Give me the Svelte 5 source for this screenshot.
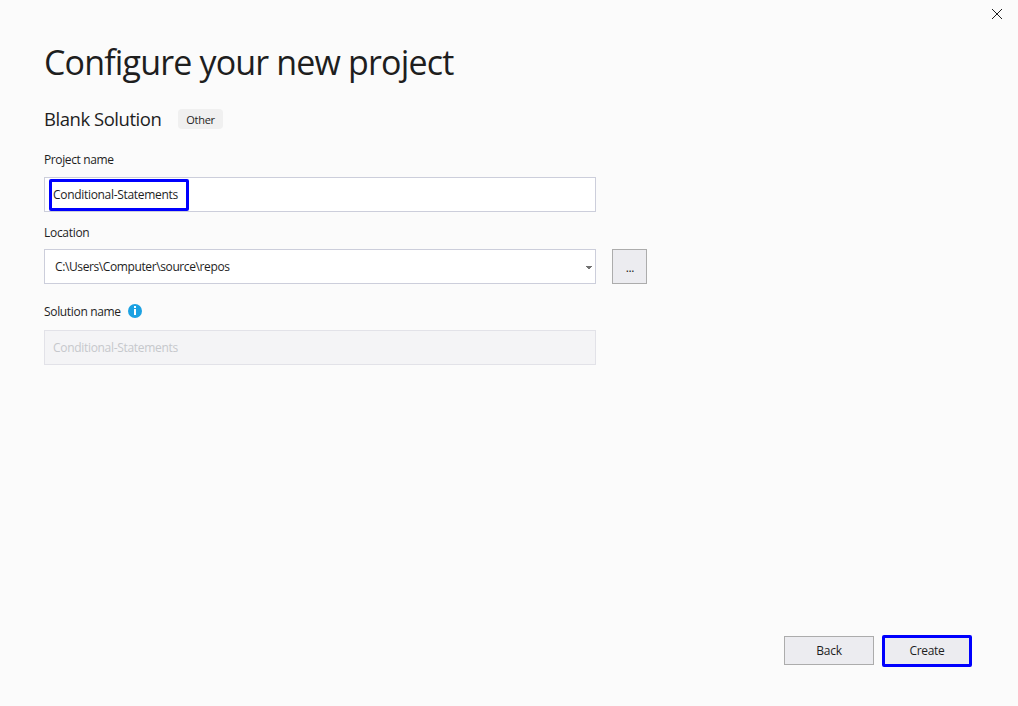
<script>
  let projectName = $state('Conditional-Statements');
  const location = 'C:\\Users\\Computer\\source\\repos';
</script>

<main class="dialog">
  <button class="close" aria-label="Close">
    <svg width="12" height="12" viewBox="0 0 12 12"><path d="M1 1L11 11M11 1L1 11" /></svg>
  </button>

  <h1><span>Configure your new project</span></h1>

  <div class="template">
    <h2>Blank Solution</h2>
    <span class="tag">Other</span>
  </div>

  <div class="label first">Project name</div>
  <div class="field">
    <span class="name">{projectName}</span>
    <span class="marker"></span>
  </div>

  <div class="label second">Location</div>
  <div class="row">
    <div class="field combo">
      <span class="path">{location}</span>
      <svg class="arrow" width="6" height="3" viewBox="0 0 6 3"><path d="M0 0H6V1H5V2H4V3H2V2H1V1H0Z" /></svg>
    </div>
    <button class="browse">...</button>
  </div>

  <div class="label third">
    <span>Solution name</span>
    <svg width="14" height="14" viewBox="0 0 14 14">
      <circle cx="7" cy="7" r="7" fill="#1ba1e2" />
      <path d="M6 2H8V4H6ZM6 5H8V11H6Z" fill="#fff" />
    </svg>
  </div>
  <div class="field disabled"><span class="name">{projectName}</span></div>

  <footer>
    <button class="action">Back</button>
    <button class="action create">Create</button>
  </footer>
</main>

<style>
  :global(body) { margin: 0; background: #fbfbfb; }
  .dialog {
    box-sizing: border-box;
    width: 1018px;
    height: 706px;
    padding: 0 46px 39px 44px;
    display: flex;
    flex-direction: column;
    position: relative;
    overflow: hidden;
    background: #fbfbfb;
    color: #1e1e1e;
    font: 12px/16px "Open Sans", "Noto Sans", sans-serif;
    white-space: nowrap;
  }
  button { font: inherit; color: inherit; padding: 0; box-sizing: border-box; }
  .close {
    position: absolute;
    left: 991px;
    top: 8px;
    width: 12px;
    height: 12px;
    border: 0;
    background: none;
  }
  .close svg { display: block; }
  .close path { stroke: #1e1e1e; stroke-width: 1; fill: none; }
  h1 {
    margin: 38px 0 0;
    height: 48px;
    font-size: 34px;
    line-height: 48px;
    font-weight: 400;
    letter-spacing: -0.84px;
  }
  .template { display: flex; align-items: center; height: 20px; margin-top: 23px; }
  h2 { margin: 0; width: 134px; font-size: 18.5px; line-height: 20px; font-weight: 400; letter-spacing: -0.46px; }
  .tag {
    width: 45px;
    height: 20px;
    line-height: 21px;
    font-size: 11px;
    letter-spacing: -0.25px;
    text-align: center;
    border-radius: 4px;
    background: #f0f0f0;
  }
  .label { height: 16px; letter-spacing: -0.38px; }
  .first { margin: 23px 0 9px; }
  .second { margin: 13px 0 8px; letter-spacing: -0.3px; }
  .third { margin: 20px 0 10px; display: flex; letter-spacing: -0.33px; }
  .third span { width: 84px; }
  .field {
    box-sizing: border-box;
    width: 552px;
    height: 35px;
    flex: none;
    display: flex;
    align-items: center;
    border: 1px solid #cccedb;
    background: #fff;
    padding: 0 3px 0 8px;
    position: relative;
    letter-spacing: -0.31px;
  }
  .marker {
    position: absolute;
    left: 4px;
    top: 1px;
    width: 140px;
    height: 32px;
    box-sizing: border-box;
    border: 3px solid #0000fe;
    border-radius: 2px;
  }
  .combo { padding-left: 10px; justify-content: space-between; letter-spacing: -0.39px; }
  .arrow { margin-top: 2px; }
  .arrow path { fill: #717171; }
  .row { display: flex; gap: 16px; }
  .browse { width: 35px; height: 35px; padding: 2px 0 0 1px; border: 1px solid #acacac; background: #ececf0; letter-spacing: -0.4px; }
  .disabled { background: #f4f4f6; border-color: #e2e2e8; color: #c6c8cc; }
  footer { margin-top: auto; display: flex; justify-content: flex-end; align-items: flex-start; gap: 8px; height: 32px; }
  .action { width: 90px; height: 29px; margin-top: 1px; border: 1px solid #acacac; background: #ececf0; letter-spacing: -0.3px; }
  .create { height: 32px; margin-top: 0; border: 3px solid #0000fe; border-radius: 2px; }
</style>
